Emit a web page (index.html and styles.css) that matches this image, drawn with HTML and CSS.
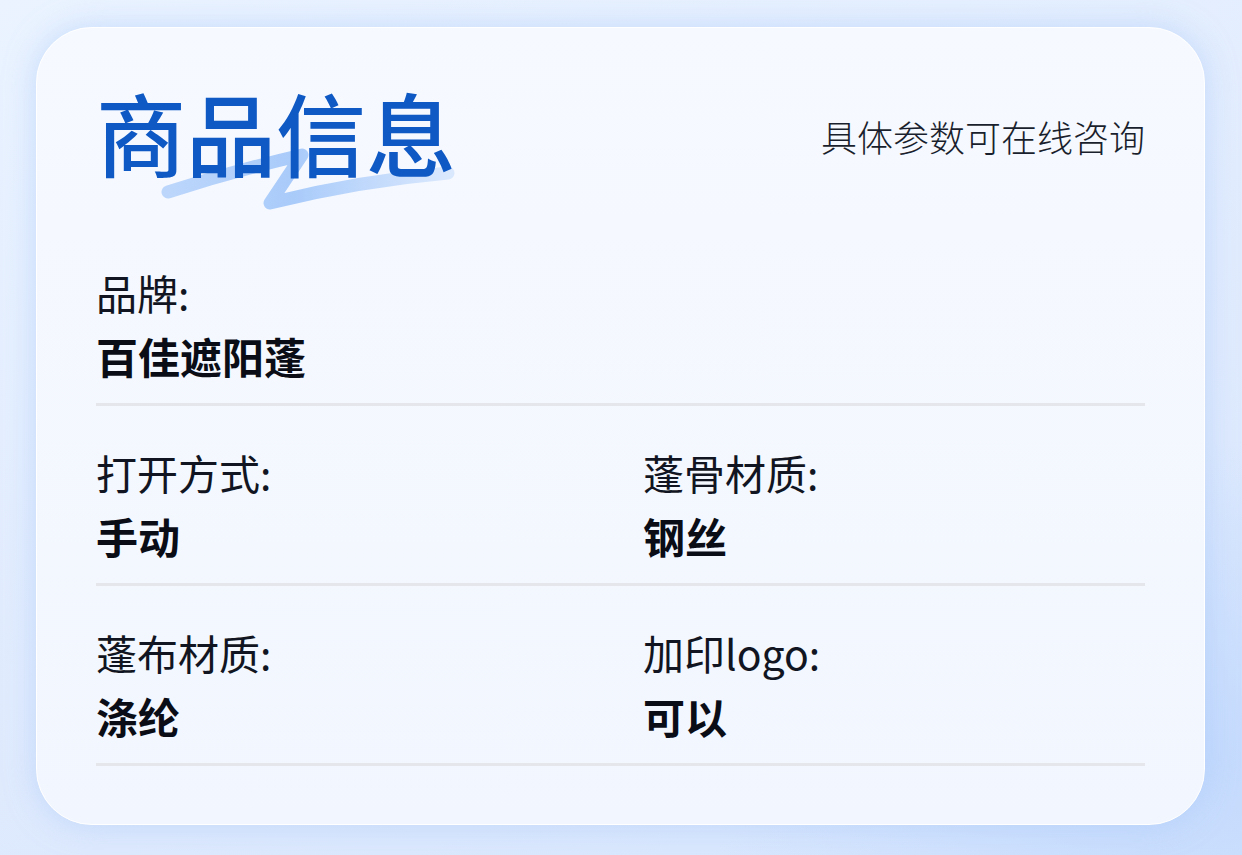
FILE: index.html
```html
<!DOCTYPE html>
<html lang="zh">
<head>
<meta charset="utf-8">
<link rel="stylesheet" href="styles.css">
</head>
<body>
<div class="card">
  <div class="header">
    <div class="title-wrap">
      <svg class="brush" width="320" height="70" viewBox="0 0 320 70">
        <defs>
          <linearGradient id="bg1" x1="0" y1="0" x2="1" y2="0">
            <stop offset="0" stop-color="#bcd6fb"/>
            <stop offset="0.45" stop-color="#a9cbfa"/>
            <stop offset="1" stop-color="#dae8fd"/>
          </linearGradient>
        </defs>
        <path d="M10,49 Q75,28 144,12 L112,60 Q200,38 290,30" fill="none" stroke="url(#bg1)" stroke-width="13" stroke-linecap="round" stroke-linejoin="round"/>
      </svg>
      <h1 class="title">商品信息</h1>
    </div>
    <div class="subtitle">具体参数可在线咨询</div>
  </div>
  <div class="rows">
    <div class="row">
      <div class="field">
        <div class="label">品牌:</div>
        <div class="value">百佳遮阳蓬</div>
      </div>
    </div>
    <div class="row two">
      <div class="field">
        <div class="label">打开方式:</div>
        <div class="value">手动</div>
      </div>
      <div class="field">
        <div class="label">蓬骨材质:</div>
        <div class="value">钢丝</div>
      </div>
    </div>
    <div class="row two">
      <div class="field">
        <div class="label">蓬布材质:</div>
        <div class="value">涤纶</div>
      </div>
      <div class="field">
        <div class="label">加印logo:</div>
        <div class="value">可以</div>
      </div>
    </div>
  </div>
</div>
</body>
</html>
```
FILE: styles.css
```css
html, body {
  margin: 0;
  padding: 0;
}
body {
  width: 1242px;
  height: 855px;
  box-sizing: border-box;
  padding: 27px 37px 30px 36px;
  background:
    radial-gradient(ellipse 500px 320px at 1200px 760px, #c4dafd 0%, rgba(196,218,253,0) 100%),
    linear-gradient(160deg, #eaf3ff 0%, #dfeafd 60%, #d5e5fd 100%);
  font-family: "Noto Sans CJK SC", "Noto Sans", sans-serif;
  overflow: hidden;
}
.card {
  height: 798px;
  box-sizing: border-box;
  border-radius: 56px;
  background: linear-gradient(180deg, #f6f9ff 0%, #f2f6fe 100%);
  border: 1px solid #ffffff;
  box-shadow: 0 0 30px rgba(170, 200, 250, 0.55);
  padding: 58px 59px 0 59px;
}
.header {
  display: flex;
  justify-content: space-between;
  align-items: flex-start;
}
.title-wrap {
  position: relative;
}
.brush {
  position: absolute;
  left: 62px;
  top: 57px;
}
.title {
  position: relative;
  margin: 0;
  font-size: 90px;
  line-height: 1;
  font-weight: 500;
  color: #0f59c4;
  letter-spacing: 0;
}
.subtitle {
  margin-top: 32px;
  font-size: 36px;
  line-height: 1;
  font-weight: 300;
  color: #1a1f2d;
}
.rows {
  margin-top: 92px;
}
.row {
  display: grid;
  grid-template-columns: 547px 1fr;
  border-bottom: 3px solid #e4e6eb;
  padding-bottom: 22px;
  margin-bottom: 42px;
}
.label {
  font-size: 41px;
  line-height: 48px;
  font-weight: 400;
  color: #111522;
}
.value {
  margin-top: 15px;
  font-size: 42px;
  line-height: 50px;
  font-weight: 700;
  color: #0b0d16;
}
```
